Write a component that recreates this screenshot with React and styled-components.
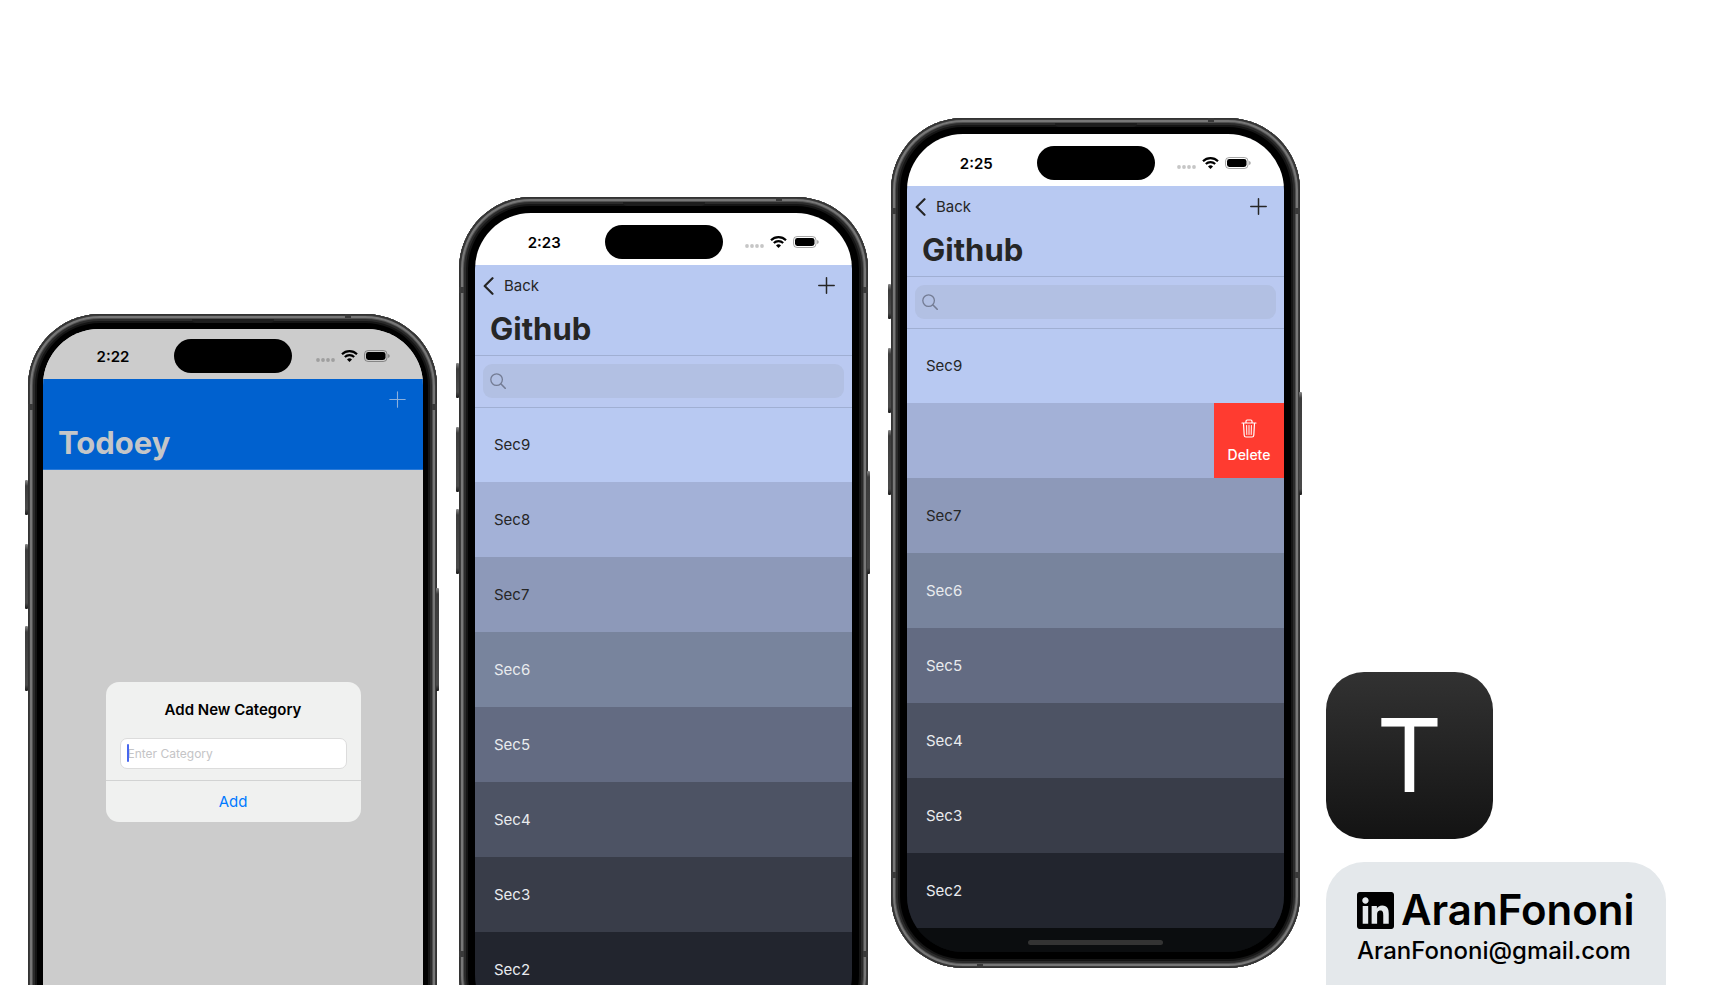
import React from "react";
import styled, { createGlobalStyle, css } from "styled-components";
import { FaLinkedin } from "react-icons/fa";

const GlobalStyle = createGlobalStyle`
  *, *::before, *::after { box-sizing: border-box; }
  body { margin: 0; background: #fff; font-family: Inter, "Liberation Sans", sans-serif; }
  button, input { font: inherit; color: inherit; }
  button { border: 0; padding: 0; background: none; cursor: pointer; }
  svg { display: block; flex: none; }
`;

const Page = styled.main`
  display: grid;
  grid-template-columns: 431px 432px 435px minmax(0, 340px);
  grid-template-rows: minmax(0, 1fr);
  align-items: start;
  height: 100vh;
  padding-left: 28px;
  overflow: hidden;
`;

/* ---------- device ---------- */

const Device = styled.article`
  position: relative;
  width: 409px;
  margin-top: ${(p) => p.$drop}px;
  padding: ${(p) => (p.$wide ? "15px 14px 15px 15px" : "16px")};
  border-radius: 72px;
  background: #000;
  box-shadow:
    inset 0 0 0 1px #333,
    inset 0 0 0 2px #3c3c3c,
    inset 0 0 0 4px #777,
    inset 0 0 0 5px #505050,
    inset 0 0 0 7px #2b2b2b,
    inset 0 0 0 9px #151515;
`;

const SideKey = styled.span`
  position: absolute;
  top: ${(p) => p.$top}px;
  ${(p) => (p.$right ? "right: -2px;" : "left: -3px;")}
  width: 3px;
  height: ${(p) => p.$length}px;
  border-radius: 1px;
  background: linear-gradient(#8a8a8a, #3c3c3c 6px, #4a4a4a calc(100% - 6px), #1a1a1a);
`;

const Antenna = styled.span`
  position: absolute;
  background: #3a3a3a;
  ${(p) => (p.$across ? "width: 6px; height: 4px;" : "width: 5px; height: 6px;")}
  ${(p) => p.$at}
`;

const Speaker = styled.span`
  position: absolute;
  top: 5px;
  left: 50%;
  width: 82px;
  height: 4px;
  margin-left: -41px;
  border-radius: 0 0 4px 4px;
  background: #1d1d1d;
`;

const Screen = styled.div`
  display: flex;
  flex-direction: column;
  height: 818px;
  overflow: hidden;
  border-radius: 56px;
  background: ${(p) => p.$bg};
`;

const StatusBar = styled.div`
  display: grid;
  grid-template-columns: 1fr 118px 1fr;
  align-items: center;
  flex: none;
  padding: ${(p) => (p.$short ? 10 : 12)}px 0 6px;
  background: ${(p) => (p.$short ? "#ccc" : "#fff")};
`;

const Clock = styled.time`
  padding: 1px 0 0 9px;
  text-align: center;
  font-size: 15px;
  line-height: 20px;
  font-weight: 600;
  color: #000;
`;

const Island = styled.span`
  height: 34px;
  border-radius: 17px;
  background: #000;
`;

const Signals = styled.span`
  display: flex;
  justify-content: flex-end;
  align-items: center;
  gap: 6px;
  padding-right: 33px;
`;

/* ---------- navigation ---------- */

const NavBar = styled.header`
  flex: none;
  height: ${(p) => (p.$blue ? 91 : 90)}px;
  background: ${(p) => (p.$blue ? "#0061cf" : "#b8c9f2")};
  ${(p) => p.$blue && css`border-bottom: 1px solid #2a7ad8;`}
  color: ${(p) => (p.$blue ? "#c4c6c8" : "#262626")};
`;

const NavRow = styled.div`
  display: flex;
  align-items: center;
  height: 41px;
  padding: 0 17px 0 8px;
`;

const BackButton = styled.button`
  display: flex;
  align-items: center;
  gap: 10px;
  font-size: 15px;
  line-height: 20px;
`;

const PlusButton = styled.button`
  margin-left: auto;
  color: ${(p) => (p.$dim ? "#8cb0dc" : "inherit")};
`;

const LargeTitle = styled.h1`
  margin: 0;
  padding-left: 15px;
  font-size: 31px;
  line-height: 46px;
  font-weight: 700;
`;

const SearchBar = styled.label`
  flex: none;
  display: block;
  position: relative;
  padding: 8px 8px 9px;
  background: #bac9f1;
  border-top: 1px solid #a0afd3;

  svg { position: absolute; left: 15px; top: 17px; }
`;

const SearchInput = styled.input`
  display: block;
  width: 100%;
  height: 34px;
  padding: 0 10px 0 28px;
  border: 0;
  border-radius: 9px;
  outline: 0;
  background: #b2c0e3;
  font-size: 15px;
`;

/* ---------- list ---------- */

const List = styled.ul`
  flex: none;
  margin: 0;
  padding: 0;
  list-style: none;
`;

const Row = styled.li`
  display: flex;
  align-items: center;
  height: 75px;
  padding: ${(p) => (p.$swiped ? "0" : "1px 0 0 19px")};
  background: ${(p) => p.$bg};
  color: ${(p) => (p.$light ? "#e9ebee" : "#262626")};
  font-size: 15px;
  line-height: 20px;
  ${(p) => p.$swiped && css`justify-content: flex-end;`}

  &:first-child { box-shadow: inset 0 1px #a0afd3; }
`;

const DeleteButton = styled.button`
  display: flex;
  flex-direction: column;
  align-items: center;
  justify-content: center;
  gap: 8px;
  width: 70px;
  height: 75px;
  padding-top: 2px;
  background: #ff3b30;
  color: #fff;
  font-size: 14px;
  line-height: 18px;
  font-weight: 500;
`;

const HomeArea = styled.div`
  flex: 1;
  display: flex;
  justify-content: center;
  padding-top: 12px;
  background: #0b0d0f;
`;

const HomeIndicator = styled.span`
  width: 135px;
  height: 5px;
  border-radius: 3px;
  background: #333;
`;

/* ---------- alert ---------- */

const AlertArea = styled.div`
  display: flex;
  justify-content: center;
  padding-top: 212px;
`;

const Alert = styled.form`
  width: 255px;
  border-radius: 13px;
  background: #f0f1f0;
  color: #000;
`;

const AlertTitle = styled.h2`
  margin: 0;
  padding: 18px 0;
  text-align: center;
  font-size: 15px;
  line-height: 20px;
  font-weight: 600;
`;

const Field = styled.label`
  position: relative;
  display: block;
  margin: 0 14px 11px;

  &::after {
    content: "";
    position: absolute;
    left: 7px;
    top: 6px;
    width: 2px;
    height: 18px;
    border-radius: 1px;
    background: #4767ee;
  }
`;

const FieldInput = styled.input`
  display: block;
  width: 100%;
  height: 31px;
  padding: 0 7px;
  border: 1px solid #dcdcdc;
  border-radius: 7px;
  outline: 0;
  background: #fff;
  font-size: 12px;
  &::placeholder { color: #c4c4c6; opacity: 1; }
`;

const AlertAction = styled.button`
  display: block;
  width: 100%;
  height: 42px;
  border-top: 1px solid #d2d3d3;
  color: #007aff;
  font-size: 15px;
  line-height: 20px;
`;

/* ---------- brand column ---------- */

const Brand = styled.aside`
  align-self: end;
  display: flex;
  flex-direction: column;
  align-items: flex-start;
  gap: 23px;
`;

const AppIcon = styled.div`
  display: grid;
  place-items: center;
  width: 167px;
  height: 167px;
  padding-bottom: 2px;
  border-radius: 38px;
  background: linear-gradient(#323232, #131313);
  color: #fff;
  font-size: 102px;
  line-height: 120px;
`;

const ContactCard = styled.address`
  width: 100%;
  padding: 27px 31px 19px;
  border-radius: 38px 38px 0 0;
  background: #e4e8eb;
  color: #000;
  font-style: normal;
`;

const Handle = styled.a`
  display: flex;
  align-items: center;
  gap: 7px;
  color: inherit;
  text-decoration: none;
  font-size: 42px;
  line-height: 42px;
  font-weight: 600;
`;

const LinkedinMark = styled(FaLinkedin).attrs({ viewBox: "0 32 448 448" })`
  width: 37px;
  height: 37px;
`;

const Email = styled.a`
  display: block;
  padding-top: 5px;
  color: inherit;
  text-decoration: none;
  font-size: 24px;
  line-height: 30px;
  font-weight: 500;
`;

/* ---------- icons ---------- */

const DotsIcon = () => (
  <svg width="19" height="16" viewBox="0 0 19 16" fill="#000" opacity="0.22">
    {[2, 7, 12, 17].map((x) => <circle key={x} cx={x} cy="12" r="1.9" />)}
  </svg>
);

const WifiIcon = () => (
  <svg width="17" height="12" viewBox="0 0 17 12" fill="none" stroke="#000">
    <path d="M1 4.2a10.7 10.7 0 0 1 15 0" strokeWidth="2.2" />
    <path d="M3.8 7.1a6.7 6.7 0 0 1 9.4 0" strokeWidth="2.1" />
    <path d="M8.5 11.9 6 9.4a3.6 3.6 0 0 1 5 0z" fill="#000" stroke="none" />
  </svg>
);

const BatteryIcon = () => (
  <svg width="26" height="12" viewBox="0 0 26 12">
    <rect x="0.5" y="0.5" width="22.5" height="11" rx="3.6" fill="none" stroke="#000" strokeOpacity="0.35" />
    <rect x="2" y="2" width="19.5" height="8" rx="2.4" />
    <path d="M24.2 4v4q1.5-.6 1.5-2t-1.5-2z" fillOpacity="0.4" />
  </svg>
);

const ChevronIcon = () => (
  <svg width="11" height="18" viewBox="0 0 11 18" fill="none" stroke="currentColor" strokeWidth="2.2" strokeLinecap="round" strokeLinejoin="round">
    <path d="M9.5 1.2 1.7 9l7.8 7.8" />
  </svg>
);

const PlusIcon = ({ thin }) => (
  <svg width="17" height="17" viewBox="0 0 17 17" stroke="currentColor" strokeWidth={thin ? 1.1 : 1.5} strokeLinecap="round">
    <path d="M8.5.8v15.4M.8 8.5h15.4" />
  </svg>
);

const SearchIcon = () => (
  <svg width="16" height="16" viewBox="0 0 16 16" fill="none" stroke="#747c94" strokeWidth="1.3" strokeLinecap="round">
    <circle cx="6.6" cy="6.6" r="5.8" />
    <path d="m11 11 4.2 4.2" strokeWidth="1.6" />
  </svg>
);

const TrashIcon = () => (
  <svg width="16" height="19" viewBox="0 0 16 19" fill="none" stroke="#fff" strokeWidth="1.2" strokeLinecap="round" strokeLinejoin="round">
    <path d="M1 4h14M5 3.8V2.2Q5 1 6.2 1h3.6Q11 1 11 2.2v1.6M2.5 4.2l.7 12Q3.3 18 5 18h6q1.7 0 1.8-1.8l.7-12" />
    <path d="M5.6 6.5l.2 9M8 6.5v9M10.4 6.5l-.2 9" strokeWidth="1" />
  </svg>
);

/* ---------- composition ---------- */

const ROWS = [
  { name: "Sec9", bg: "#b8c9f2" },
  { name: "Sec8", bg: "#a3b1d7" },
  { name: "Sec7", bg: "#8d99b9" },
  { name: "Sec6", bg: "#78849d", light: true },
  { name: "Sec5", bg: "#636b82", light: true },
  { name: "Sec4", bg: "#4d5364", light: true },
  { name: "Sec3", bg: "#393d49", light: true },
  { name: "Sec2", bg: "#22252e", light: true },
];

function Phone({ drop, time, wide, bg = "#0b0d0f", children }) {
  return (
    <Device $drop={drop} $wide={wide}>
      <Antenna $at="top: 90px; left: 0;" />
      <Antenna $at="top: 90px; right: 0;" />
      <Antenna $at="bottom: 90px; left: 0;" />
      <Antenna $at="bottom: 90px; right: 0;" />
      <Antenna $across $at="top: 0; right: 86px;" />
      <Antenna $across $at="bottom: 0; left: 86px;" />
      <Speaker />
      <SideKey $top={166} $length={35} />
      <SideKey $top={230} $length={65} />
      <SideKey $top={312} $length={65} />
      <SideKey $right $top={274} $length={103} />
      <Screen $bg={bg}>
        <StatusBar $short={wide}>
          <Clock>{time}</Clock>
          <Island />
          <Signals>
            <DotsIcon />
            <WifiIcon />
            <BatteryIcon />
          </Signals>
        </StatusBar>
        {children}
      </Screen>
    </Device>
  );
}

function ItemsScreen({ swiped }) {
  return (
    <>
      <NavBar>
        <NavRow>
          <BackButton type="button"><ChevronIcon />Back</BackButton>
          <PlusButton type="button" aria-label="Add item"><PlusIcon /></PlusButton>
        </NavRow>
        <LargeTitle>Github</LargeTitle>
      </NavBar>
      <SearchBar>
        <SearchInput type="search" aria-label="Search" />
        <SearchIcon />
      </SearchBar>
      <List>
        {ROWS.map((row) =>
          row.name === swiped ? (
            <Row key={row.name} $bg={row.bg} $swiped>
              <DeleteButton type="button"><TrashIcon />Delete</DeleteButton>
            </Row>
          ) : (
            <Row key={row.name} $bg={row.bg} $light={row.light}>{row.name}</Row>
          )
        )}
      </List>
      <HomeArea><HomeIndicator /></HomeArea>
    </>
  );
}

export default function App() {
  return (
    <>
      <GlobalStyle />
      <Page>
        <Phone drop={314} time="2:22" wide bg="#ccc">
          <NavBar $blue>
            <NavRow>
              <PlusButton type="button" aria-label="Add category" $dim><PlusIcon thin /></PlusButton>
            </NavRow>
            <LargeTitle>Todoey</LargeTitle>
          </NavBar>
          <AlertArea>
            <Alert onSubmit={(e) => e.preventDefault()}>
              <AlertTitle>Add New Category</AlertTitle>
              <Field>
                <FieldInput type="text" placeholder="Enter Category" aria-label="Category name" />
              </Field>
              <AlertAction type="submit">Add</AlertAction>
            </Alert>
          </AlertArea>
        </Phone>
        <Phone drop={197} time="2:23"><ItemsScreen /></Phone>
        <Phone drop={118} time="2:25"><ItemsScreen swiped="Sec8" /></Phone>
        <Brand>
          <AppIcon>T</AppIcon>
          <ContactCard>
            <Handle href="#linkedin"><LinkedinMark />AranFononi</Handle>
            <Email href="mailto:AranFononi@gmail.com">AranFononi@gmail.com</Email>
          </ContactCard>
        </Brand>
      </Page>
    </>
  );
}
